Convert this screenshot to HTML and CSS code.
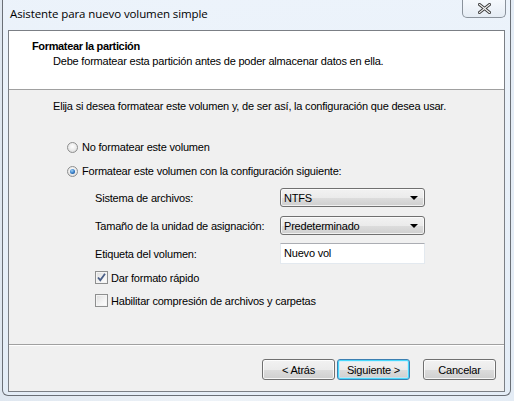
FILE: index.html
```html
<!DOCTYPE html>
<html lang="es">
<head>
<meta charset="utf-8">
<title>Asistente para nuevo volumen simple</title>
<link rel="stylesheet" href="styles.css">
</head>
<body>
<div class="desk">
  <div class="window">
    <div class="titlebar">
      <span class="title">Asistente para nuevo volumen simple</span>
      <span class="close"><svg width="13" height="11" viewBox="0 0 13 11"><path d="M1.5 1.5 L11.5 9.5 M11.5 1.5 L1.5 9.5" stroke="#3c3c3c" stroke-width="3" stroke-linecap="square"/><path d="M1.5 1.5 L11.5 9.5 M11.5 1.5 L1.5 9.5" stroke="#f4f4f4" stroke-width="1.2" stroke-linecap="square"/></svg></span>
    </div>
    <div class="content">
      <div class="header">
        <div class="h-title">Formatear la partición</div>
        <div class="h-sub">Debe formatear esta partición antes de poder almacenar datos en ella.</div>
      </div>
      <div class="main">
        <p class="intro">Elija si desea formatear este volumen y, de ser así, la configuración que desea usar.</p>
        <div class="opt opt-first"><span class="radio"></span><span>No formatear este volumen</span></div>
        <div class="opt"><span class="radio checked"></span><span>Formatear este volumen con la configuración siguiente:</span></div>
        <div class="grid">
          <span class="lbl">Sistema de archivos:</span>
          <span class="combo"><span>NTFS</span><span class="arrow"></span></span>
          <span class="lbl">Tamaño de la unidad de asignación:</span>
          <span class="combo"><span>Predeterminado</span><span class="arrow"></span></span>
          <span class="lbl">Etiqueta del volumen:</span>
          <span class="textbox">Nuevo vol</span>
        </div>
        <div class="chk chk-first"><span class="box"><svg width="11" height="11" viewBox="0 0 11 11"><path d="M2 5.5 L4.3 8.2 L9 1.8" fill="none" stroke="#4a5f88" stroke-width="1.8"/></svg></span><span>Dar formato rápido</span></div>
        <div class="chk"><span class="box"></span><span>Habilitar compresión de archivos y carpetas</span></div>
      </div>
      <div class="footer">
        <span class="btn">&lt; Atrás</span>
        <span class="btn default">Siguiente &gt;</span>
        <span class="btn cancel">Cancelar</span>
      </div>
    </div>
  </div>
</div>
</body>
</html>
```
FILE: styles.css
```css
html, body {
  margin: 0;
  padding: 0;
}
body {
  width: 514px;
  height: 401px;
  overflow: hidden;
  background: #e9eef3;
  font-family: "Liberation Sans", Arial, sans-serif;
  font-size: 11px;
  letter-spacing: -0.2px;
  color: #000;
}
.desk {
  width: 514px;
  height: 401px;
  background: linear-gradient(90deg, #dfe7f0 0%, #eef3f8 40%, #e4ecf5 100%);
}
.window {
  margin-left: 2px;
  width: 509px;
  height: 396px;
  border: 1px solid #6a6f76;
  border-top: none;
  border-radius: 0 0 6px 6px;
  background: linear-gradient(180deg, rgba(236,243,251,0.95) 0%, rgba(228,237,247,0.9) 100%);
  box-sizing: border-box;
  padding: 0 5px;
  display: flex;
  flex-direction: column;
}
.titlebar {
  height: 30px;
  display: flex;
  align-items: flex-start;
  justify-content: space-between;
}
.title {
  font-family: "Open Sans", sans-serif;
  font-size: 11.5px;
  letter-spacing: -0.1px;
  margin-top: 6px;
  margin-left: 2px;
  color: #000;
}
.close {
  width: 44px;
  height: 18px;
  margin-right: -1px;
  border: 1px solid #8a929b;
  border-top: none;
  border-radius: 0 0 5px 5px;
  box-sizing: border-box;
  background: linear-gradient(180deg, rgba(255,255,255,0.5), rgba(225,232,240,0.6));
  display: flex;
  align-items: center;
  justify-content: center;
}
.content {
  border: 1px solid #7b7f85;
  height: 362px;
  box-sizing: border-box;
  display: flex;
  flex-direction: column;
  background: #f0f0f0;
}
.header {
  background: #fff;
  height: 59px;
  box-sizing: border-box;
  border-bottom: 1px solid #a0a0a0;
  padding: 8px 0 0 23px;
}
.h-title {
  font-weight: bold;
  letter-spacing: -0.35px;
  line-height: 14px;
  height: 15px;
}
.h-sub {
  padding-left: 21px;
  line-height: 14px;
}
.main {
  flex: 1;
  padding: 9px 0 0 44px;
  border-bottom: 1px solid #a0a0a0;
  box-shadow: 0 1px 0 #fff;
}
.intro {
  margin: 0;
  line-height: 14px;
}
.opt {
  display: flex;
  align-items: center;
  gap: 4px;
  margin-left: 14px;
  height: 14px;
  margin-top: 10px;
}
.opt-first {
  margin-top: 27px;
}
.radio {
  width: 11px;
  height: 11px;
  border-radius: 50%;
  border: 1px solid #8e8f8f;
  background: radial-gradient(circle at 50% 40%, #ffffff 0%, #e8e8e8 60%, #cfcfcf 100%);
  box-sizing: border-box;
  position: relative;
  flex: none;
}
.radio.checked::after {
  content: "";
  position: absolute;
  left: 2px;
  top: 2px;
  width: 5px;
  height: 5px;
  border-radius: 50%;
  background: radial-gradient(circle at 40% 35%, #9fd3f7 0%, #2f77c4 55%, #123a72 100%);
}
.grid {
  display: grid;
  grid-template-columns: 185px 145px;
  grid-auto-rows: 19px;
  row-gap: 9px;
  align-items: center;
  margin-left: 42px;
  margin-top: 10px;
}
.grid .textbox {
  height: 21px;
}
.combo {
  height: 19px;
  box-sizing: border-box;
  border: 1px solid #707070;
  border-radius: 3px;
  background: linear-gradient(180deg, #f2f2f2 0%, #ebebeb 50%, #dddddd 51%, #cfcfcf 100%);
  box-shadow: inset 0 0 0 1px rgba(255,255,255,0.7);
  display: flex;
  align-items: center;
  justify-content: space-between;
  padding: 0 6px 0 3px;
}
.arrow {
  width: 0;
  height: 0;
  border-left: 4px solid transparent;
  border-right: 4px solid transparent;
  border-top: 4px solid #000;
}
.textbox {
  box-sizing: border-box;
  border: 1px solid #e3e9ef;
  border-top-color: #abadb3;
  background: #fff;
  padding: 2px 0 0 3px;
  line-height: 14px;
}
.chk {
  display: flex;
  align-items: center;
  gap: 3px;
  margin-left: 42px;
  height: 13px;
  margin-top: 10px;
}
.chk-first {
  margin-top: 8px;
}
.box {
  width: 13px;
  height: 13px;
  box-sizing: border-box;
  border: 1px solid #8e8f8f;
  background: linear-gradient(135deg, #dcdcdc 0%, #f4f4f4 60%, #fff 100%);
  box-shadow: inset 0 0 0 1px #f4f4f4;
  display: flex;
  align-items: center;
  justify-content: center;
  flex: none;
}
.footer {
  height: 46px;
  display: flex;
  align-items: flex-start;
  padding: 14px 0 0 253px;
  box-sizing: border-box;
}
.btn {
  width: 73px;
  height: 21px;
  box-sizing: border-box;
  border: 1px solid #707070;
  border-radius: 3px;
  background: linear-gradient(180deg, #f2f2f2 0%, #ebebeb 50%, #dddddd 51%, #cfcfcf 100%);
  box-shadow: inset 0 0 0 1px rgba(255,255,255,0.8);
  display: flex;
  align-items: center;
  justify-content: center;
  margin-right: 2px;
}
.btn.default {
  border-color: #3c7fb1;
  box-shadow: inset 0 0 0 1px #48d8fb, inset 0 0 0 2px rgba(190,235,255,0.6);
}
.btn.cancel {
  margin-left: 11px;
}
```
